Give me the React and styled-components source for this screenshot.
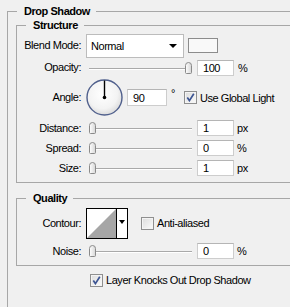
import React from 'react';
import styled, { createGlobalStyle } from 'styled-components';

const Global = createGlobalStyle`
	body {
		margin: 0;
		background: #f0f0f0;
		font-family: "Liberation Sans", Arial, sans-serif;
		font-size: 11px;
		letter-spacing: -0.45px;
		color: #000;
		overflow: hidden;
	}
`;

const Frame = styled.div`
	width: 290px;
	height: 307px;
	overflow: hidden;
`;

const Panel = styled.fieldset`
	margin: 5px 0 0 7px;
	padding: 0 0 0 8px;
	width: 320px;
	min-height: 330px;
	box-sizing: border-box;
	border: 1px solid #a7a7a7;
`;

const Group = styled.fieldset`
	margin: ${p => p.$top}px 0 0 0;
	padding: ${p => p.$pad};
	border: 1px solid #a7a7a7;
	width: 330px;
	box-sizing: border-box;
`;

const Legend = styled.legend`
	margin-left: ${p => p.$indent}px;
	padding: 0 6px 0 7px;
	font-weight: bold;
	line-height: 13px;
`;

const Row = styled.div`
	display: flex;
	align-items: center;
	height: ${p => p.$h}px;
`;

const Label = styled.span`
	flex: none;
	width: 64px;
	text-align: right;
	line-height: 13px;
`;

const Select = styled.div`
	margin-left: 5px;
	width: 98px;
	height: 24px;
	box-sizing: border-box;
	background: #fff;
	border: 1px solid #bcbcbc;
	display: flex;
	align-items: center;
	justify-content: space-between;
	padding: 0 4px 0 4px;
`;

const Arrow = styled.span`
	width: 0;
	height: 0;
	border-left: ${p => p.$half || 4}px solid transparent;
	border-right: ${p => p.$half || 4}px solid transparent;
	border-top: 4px solid #000;
	margin-right: ${p => (p.$half ? 0 : 2)}px;
`;

const Swatch = styled.div`
	margin-left: 4px;
	width: 30px;
	height: 15px;
	box-sizing: border-box;
	border: 1px solid #8c8c8c;
	background: #f9f9f9;
`;

const Track = styled.div`
	position: relative;
	flex: none;
	margin-left: 8px;
	width: 103px;
	height: 12px;
	&::before {
		content: "";
		position: absolute;
		left: 0;
		right: 0;
		top: 6px;
		height: 1px;
		background: #a9a9a9;
		box-shadow: 0 1px 0 #fff;
	}
`;

const Thumb = styled.svg`
	position: absolute;
	top: 0;
`;

const Field = styled.input`
	flex: none;
	margin-left: ${p => p.$ml || 5}px;
	width: ${p => p.$w || 37}px;
	height: ${p => p.$h || 16}px;
	box-sizing: border-box;
	border: 1px solid #cdcdcd;
	border-top-color: #b5b5b5;
	background: #fff;
	padding: 0 0 0 5px;
	font: inherit;
	letter-spacing: inherit;
	color: #000;
	outline: none;
`;

const Unit = styled.span`
	margin-left: ${p => p.$ml || 3}px;
	align-self: ${p => (p.$sup ? 'flex-start' : 'center')};
	margin-top: ${p => (p.$sup ? 10 : 0)}px;
`;

const Dial = styled.svg`
	flex: none;
	margin-left: 5px;
`;

const Check = styled.label`
	display: flex;
	align-items: center;
	margin-left: ${p => p.$ml}px;
	gap: 3px;
	white-space: nowrap;
`;

const Box = styled.span`
	flex: none;
	width: 13px;
	height: 13px;
	box-sizing: border-box;
	border: 1px solid #8f8f8f;
	background: linear-gradient(135deg, #dcdcdc, #fbfbfb);
	box-shadow: inset 0 0 0 1px #f4f4f4;
	display: flex;
	align-items: center;
	justify-content: center;
`;

const Contour = styled.div`
	flex: none;
	margin-left: 5px;
	width: 42px;
	height: 31px;
	box-sizing: border-box;
	border: 1px solid #000;
	display: flex;
	background: #fff;
`;

const ContourArrow = styled.div`
	flex: 1;
	border-left: 1px solid #000;
	display: flex;
	align-items: center;
	justify-content: center;
	padding-bottom: 2px;
`;

const Footer = styled(Row)`
	margin-top: 4px;
	padding-left: 74px;
`;

function Slider({ at }) {
	return (
		<Track>
			<Thumb width="7" height="12" viewBox="0 0 7 12" style={{ left: at * 96 }}>
				<defs>
					<linearGradient id="tg" x1="0" x2="1" y1="0" y2="0">
						<stop offset="0" stopColor="#ffffff" />
						<stop offset="1" stopColor="#d6d6d6" />
					</linearGradient>
				</defs>
				<path d="M0.5 3.5 Q0.5 0.5 3.5 0.5 Q6.5 0.5 6.5 3.5 V10.5 Q6.5 11.5 5.5 11.5 H1.5 Q0.5 11.5 0.5 10.5 Z" fill="url(#tg)" stroke="#8a8a8a" />
			</Thumb>
		</Track>
	);
}

function Tick({ on }) {
	return (
		<Box>
			{on && (
				<svg width="9" height="9" viewBox="0 0 9 9">
					<path d="M1.3 4.6 L3.4 7.6 L7.8 0.8" fill="none" stroke="#3d5593" strokeWidth="1.7" />
				</svg>
			)}
		</Box>
	);
}

function SliderRow({ label, value, unit, at = 0 }) {
	return (
		<Row $h={20}>
			<Label>{label}</Label>
			<Slider at={at} />
			<Field readOnly value={value} />
			<Unit>{unit}</Unit>
		</Row>
	);
}

export default function App() {
	return (
		<Frame>
			<Global />
			<Panel>
				<Legend $indent={1}>Drop Shadow</Legend>
				<Group $top={1} $pad="1px 0 4px 0">
					<Legend $indent={9}>Structure</Legend>
					<Row $h={25}>
						<Label>Blend Mode:</Label>
						<Select>
							<span>Normal</span>
							<Arrow />
						</Select>
						<Swatch />
					</Row>
					<Row $h={19}>
						<Label>Opacity:</Label>
						<Slider at={1} />
						<Field readOnly value="100" />
						<Unit $ml={4}>%</Unit>
					</Row>
					<Row $h={41}>
						<Label>Angle:</Label>
						<Dial width="37" height="37" viewBox="0 0 37 37">
							<defs>
								<radialGradient id="dg" cx="0.45" cy="0.4" r="0.6">
									<stop offset="0" stopColor="#ffffff" />
									<stop offset="0.7" stopColor="#f3f3f3" />
									<stop offset="1" stopColor="#dcdcdc" />
								</radialGradient>
							</defs>
							<circle cx="18.5" cy="18.5" r="17.5" fill="url(#dg)" stroke="#4f5f8c" strokeWidth="1.4" />
							<line x1="18.5" y1="18.5" x2="18.5" y2="1.5" stroke="#000" strokeWidth="1.4" />
							<circle cx="18.5" cy="18.5" r="1.8" fill="#000" />
						</Dial>
						<Field readOnly value="90" $ml={4} $w={40} $h={17} />
						<Unit $ml={4} $sup>°</Unit>
						<Check $ml={9}>
							<Tick on />
							<span>Use Global Light</span>
						</Check>
					</Row>
					<SliderRow label="Distance:" value="1" unit="px" />
					<SliderRow label="Spread:" value="0" unit="%" />
					<SliderRow label="Size:" value="1" unit="px" />
				</Group>
				<Group $top={9} $pad="0 0 4px 0">
					<Legend $indent={9}>Quality</Legend>
					<Row $h={36}>
						<Label>Contour:</Label>
						<Contour>
							<svg width="29" height="29" viewBox="0 0 29 29">
								<polygon points="0,29 29,0 29,29" fill="#a6a6a6" />
							</svg>
							<ContourArrow>
								<Arrow $half={3} />
							</ContourArrow>
						</Contour>
						<Check $ml={13}>
							<Tick />
							<span>Anti-aliased</span>
						</Check>
					</Row>
					<SliderRow label="Noise:" value="0" unit="%" />
				</Group>
				<Footer $h={20}>
					<Check $ml={0}>
						<Tick on />
						<span>Layer Knocks Out Drop Shadow</span>
					</Check>
				</Footer>
			</Panel>
		</Frame>
	);
}
